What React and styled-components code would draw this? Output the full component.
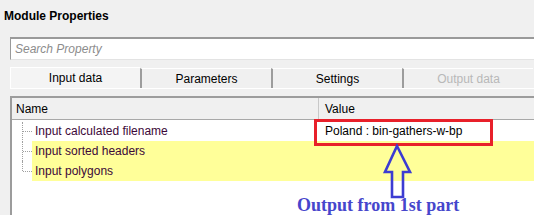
import React from "react";
import styled, { createGlobalStyle } from "styled-components";

const Global = createGlobalStyle`
  html, body {
    margin: 0;
    padding: 0;
    background: #f0f0f0;
    overflow: hidden;
  }
  body {
    font-family: "Liberation Sans", Arial, sans-serif;
    font-size: 12px;
    color: #000;
  }
`;

const Page = styled.div`
  position: relative;
  width: 534px;
  height: 215px;
  overflow: hidden;
`;

const Title = styled.div`
  font-weight: bold;
  padding: 9px 0 0 4px;
  height: 19px;
  line-height: 14px;
`;

const Search = styled.div`
  margin: 9px 0 0 10px;
  height: 20px;
  background: #fff;
  border-top: 2px solid #9a9a9a;
  border-left: 1px solid #9a9a9a;
  border-bottom: 1px solid #e3e3e3;
  padding-left: 4px;
  display: flex;
  align-items: center;
  color: #8c8c8c;
  font-style: italic;
`;

const Tabs = styled.div`
  display: flex;
  margin: 7px 0 0 10px;
  height: 21px;
  border-bottom: 1px solid #fff;
`;

const Tab = styled.div`
  width: ${(p) => (p.$first ? "130px" : "131px")};
  flex: none;
  box-sizing: border-box;
  display: flex;
  align-items: center;
  justify-content: center;
  border-top: 1px solid #fff;
  margin-top: ${(p) => (p.$active ? "0" : "1px")};
  border-left: ${(p) => (p.$first ? "1px solid #fff" : "2px solid #9c9c9c")};
  background: ${(p) => (p.$active ? "#f4f4f4" : "#f0f0f0")};
  color: ${(p) => (p.$disabled ? "#b8b8b8" : "#000")};
`;

const Grid = styled.div`
  margin: 7px 0 0 10px;
  height: 200px;
  background: #fff;
  border-top: 2px solid #9c9c9c;
  border-left: 2px solid #9c9c9c;
`;

const Header = styled.div`
  display: flex;
  height: 21px;
  background: #f0f0f0;
  border-bottom: 1px solid #a8a8a8;
  margin-bottom: 1px;
`;

const HeadCell = styled.div`
  width: ${(p) => p.$w || "auto"};
  flex: ${(p) => (p.$w ? "none" : "1")};
  box-sizing: border-box;
  display: flex;
  align-items: center;
  padding-left: ${(p) => p.$pad || "4px"};
  border-left: ${(p) => (p.$sep ? "1px solid #c8c8c8" : "none")};
`;

const Row = styled.div`
  display: flex;
  height: 20px;
`;

const Guide = styled.div`
  width: 20px;
  flex: none;
  position: relative;
  &::before {
    content: "";
    position: absolute;
    left: 10px;
    top: ${(p) => (p.$first ? "1px" : "0")};
    height: ${(p) => (p.$last ? "10px" : "20px")};
    border-left: 1px dotted #a0a0a0;
  }
  &::after {
    content: "";
    position: absolute;
    left: 11px;
    top: 10px;
    width: 9px;
    border-top: 1px dotted #a0a0a0;
  }
`;

const Body = styled.div`
  flex: 1;
  display: flex;
  background: ${(p) => (p.$hl ? "#ffff99" : "#fff")};
`;

const NameCell = styled.div`
  width: 286px;
  flex: none;
  display: flex;
  align-items: center;
  padding-left: 3px;
  color: #3c0838;
`;

const ValueCell = styled.div`
  flex: 1;
  display: flex;
  align-items: center;
  padding-left: 4px;
`;

const Marker = styled.div`
  position: absolute;
  left: 314px;
  top: 119px;
  width: 179px;
  height: 27px;
  box-sizing: border-box;
  border: 3px solid #e8202a;
`;

const Arrow = styled.svg`
  position: absolute;
  left: 380px;
  top: 140px;
`;

const Note = styled.div`
  position: absolute;
  left: 297px;
  top: 195px;
  font-family: "Liberation Serif", "Times New Roman", serif;
  font-weight: bold;
  font-size: 18px;
  line-height: 20px;
  color: #4646cc;
  white-space: nowrap;
`;

const tabs = [
  { label: "Input data", active: true },
  { label: "Parameters" },
  { label: "Settings" },
  { label: "Output data", disabled: true },
];

const rows = [
  { name: "Input calculated filename", value: "Poland : bin-gathers-w-bp" },
  { name: "Input sorted headers", hl: true },
  { name: "Input polygons", hl: true },
];

export default function App() {
  return (
    <Page>
      <Global />
      <Title>Module Properties</Title>
      <Search>Search Property</Search>
      <Tabs>
        {tabs.map((t, i) => (
          <Tab key={t.label} $first={i === 0} $active={t.active} $disabled={t.disabled}>
            {t.label}
          </Tab>
        ))}
      </Tabs>
      <Grid>
        <Header>
          <HeadCell $w="306px">Name</HeadCell>
          <HeadCell $sep $pad="6px">Value</HeadCell>
        </Header>
        {rows.map((r, i) => (
          <Row key={r.name}>
            <Guide $first={i === 0} $last={i === rows.length - 1} />
            <Body $hl={r.hl}>
              <NameCell>{r.name}</NameCell>
              <ValueCell>{r.value}</ValueCell>
            </Body>
          </Row>
        ))}
      </Grid>
      <Marker />
      <Arrow width="36" height="60" viewBox="0 0 36 60">
        <polygon
          points="17,6 30,32 23,32 23,57 12,57 12,32 5,32"
          fill="none"
          stroke="#3c3cd2"
          strokeWidth="2.6"
          strokeLinejoin="miter"
        />
      </Arrow>
      <Note>Output from 1st part</Note>
    </Page>
  );
}
